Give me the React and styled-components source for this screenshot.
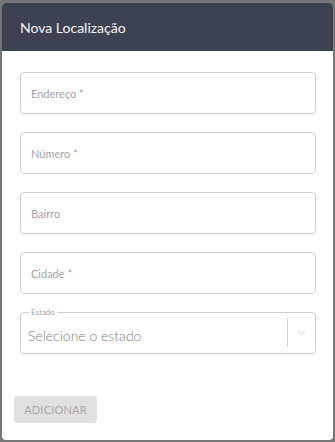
import React from "react";
import styled, { createGlobalStyle } from "styled-components";
import { ChevronDown } from "lucide-react";

const GlobalStyle = createGlobalStyle`
  html, body {
    margin: 0;
    padding: 0;
    background: #767676;
    font-family: Lato, "Open Sans", sans-serif;
  }
`;

const Dialog = styled.div`
  margin: 3px 2px 0 2px;
  width: 331px;
  height: 437px;
  background: #fff;
  border-radius: 4px;
  overflow: hidden;
  display: flex;
  flex-direction: column;
`;

const Header = styled.div`
  height: 48px;
  flex-shrink: 0;
  background: #3d4252;
  color: #f4f4f6;
  display: flex;
  align-items: center;
  padding-left: 18px;
  font-size: 14px;
`;

const Form = styled.div`
  display: flex;
  flex-direction: column;
  gap: 18px;
  padding: 21px 17px 0 18px;
`;

const Field = styled.div`
  height: 42px;
  box-sizing: border-box;
  border: 1px solid #cdcdcd;
  border-radius: 4px;
  display: flex;
  align-items: center;
  padding-left: 10px;
  font-size: 11px;
  color: #a3a3a3;
`;

const Outline = styled.fieldset`
  margin: -5px 0 0 0;
  padding: 0 0 0 7px;
  height: 47px;
  box-sizing: border-box;
  border: 1px solid #cdcdcd;
  border-radius: 4px;
  display: flex;
  align-items: center;
`;

const Legend = styled.legend`
  font-size: 8px;
  line-height: 10px;
  color: #a3a3a3;
  padding: 0 2px;
  margin-left: 1px;
`;

const Value = styled.div`
  flex: 1;
  font-size: 14px;
  font-weight: 300;
  color: #7c7c7c;
  margin-top: 6px;
`;

const Indicator = styled.div`
  width: 27px;
  height: 29px;
  margin-top: 1px;
  border-left: 1px solid #d0d0d0;
  display: flex;
  align-items: center;
  justify-content: center;
  color: #c8c8c8;
`;

const Footer = styled.div`
  margin-top: auto;
  padding: 0 0 17px 12px;
`;

const Button = styled.button`
  width: 83px;
  height: 27px;
  border: none;
  border-radius: 3px;
  background: #e0e0e0;
  color: #a8a8a8;
  font-family: Lato, "Open Sans", sans-serif;
  font-size: 11px;
  letter-spacing: 0.2px;
  text-transform: uppercase;
  padding: 0;
`;

export default function App() {
  return (
    <>
      <GlobalStyle />
      <Dialog>
        <Header>Nova Localização</Header>
        <Form>
          <Field>Endereço *</Field>
          <Field>Número *</Field>
          <Field>Bairro</Field>
          <Field>Cidade *</Field>
          <Outline>
            <Legend>Estado</Legend>
            <Value>Selecione o estado</Value>
            <Indicator>
              <ChevronDown size={13} strokeWidth={1.5} />
            </Indicator>
          </Outline>
        </Form>
        <Footer>
          <Button disabled>Adicionar</Button>
        </Footer>
      </Dialog>
    </>
  );
}
